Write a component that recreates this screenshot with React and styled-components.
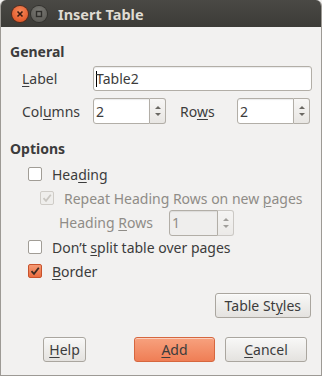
import React from 'react'
import styled, { createGlobalStyle } from 'styled-components'

const Global = createGlobalStyle`
  html, body { margin: 0; padding: 0; background: #f2f1f0; }
  body { font-family: "Noto Sans", "DejaVu Sans", sans-serif; font-size: 14px; color: #3c3c3c; }
`

const Window = styled.div`
  width: 322px;
  height: 376px;
  box-sizing: border-box;
  display: flex;
  flex-direction: column;
  background: #f2f1f0;
  border: 1px solid #9d9a95;
  border-top: none;
  border-radius: 6px 6px 0 0;
  overflow: hidden;
`

const TitleBar = styled.div`
  height: 27px;
  flex: none;
  display: flex;
  align-items: center;
  gap: 3px;
  padding-left: 11px;
  background: linear-gradient(#4a4945, #3c3b37);
  color: #dfdbd2;
  font-family: "Noto Sans", sans-serif;
  font-weight: bold;
  font-size: 14.5px;
`

const Circle = styled.div`
  width: 16px;
  height: 16px;
  border-radius: 50%;
  display: flex;
  align-items: center;
  justify-content: center;
  background: ${p => (p.$close ? 'radial-gradient(circle at 50% 35%, #f58a5c, #de4a1a)' : 'radial-gradient(circle at 50% 35%, #7b7a75, #55544f)')};
  box-shadow: 0 0 0 1px ${p => (p.$close ? '#5a2a1a' : '#33322e')};
`

const Title = styled.span`
  margin-left: 8px;
`

const Body = styled.div`
  flex: 1;
  display: flex;
  flex-direction: column;
  padding: 16px 9px 0 9px;
`

const SectionTitle = styled.div`
  font-weight: bold;
  height: 17px;
  line-height: 17px;
  margin-top: ${p => p.$mt || 0}px;
`

const GeneralGrid = styled.div`
  display: grid;
  grid-template-columns: 71px 1fr;
  row-gap: 7px;
  margin-top: 6px;
  padding-left: 12px;
  align-items: center;
`

const Label = styled.span`
  color: ${p => (p.$disabled ? '#8f8c87' : '#3c3c3c')};
  width: ${p => (p.$w ? p.$w + 'px' : 'auto')};
  flex: none;
  u { text-decoration-thickness: 1px; text-underline-offset: 2px; }
`

const TextInput = styled.div`
  height: 25px;
  box-sizing: border-box;
  border: 1px solid #b2aea7;
  border-radius: 3px;
  background: ${p => (p.$disabled ? '#efeeed' : '#fff')};
  box-shadow: inset 0 1px 1px rgba(0,0,0,0.08);
  display: flex;
  align-items: center;
  padding-left: 2px;
  color: ${p => (p.$disabled ? '#8f8c87' : '#3c3c3c')};
  flex: ${p => (p.$grow ? 1 : 'none')};
`

const Caret = styled.span`
  display: inline-block;
  width: 1px;
  height: 16px;
  background: #000;
  margin-right: -1px;
`

const SpinWrap = styled.div`
  display: flex;
  height: 26px;
  width: ${p => p.$w}px;
  flex: none;
  ${TextInput} { height: 26px; border-radius: 3px 0 0 3px; flex: 1; }
`

const SpinButtons = styled.div`
  width: 16px;
  box-sizing: border-box;
  border: 1px solid #b2aea7;
  border-left: none;
  border-radius: 0 3px 3px 0;
  background: linear-gradient(#f7f6f5, #e8e6e3);
  display: flex;
  flex-direction: column;
  align-items: center;
  justify-content: center;
  gap: 4px;
  opacity: ${p => (p.$disabled ? 0.6 : 1)};
`

const Arrow = styled.div`
  width: 0;
  height: 0;
  border-left: 3px solid transparent;
  border-right: 3px solid transparent;
  ${p => (p.$up ? 'border-bottom: 3px solid #6a6863;' : 'border-top: 3px solid #6a6863;')}
`

const NumberRow = styled.div`
  display: flex;
  align-items: center;
`

const RowsLabel = styled(Label)`
  margin-left: 14px;
  width: 57px;
`

const OptionList = styled.div`
  display: flex;
  flex-direction: column;
  margin-top: 5px;
`

const OptionRow = styled.div`
  display: flex;
  align-items: center;
  height: ${p => p.$h || 24}px;
  padding-left: ${p => p.$indent}px;
  gap: ${p => (p.$gap === undefined ? 10 : p.$gap)}px;
`

const Box = styled.div`
  width: 14px;
  height: 14px;
  box-sizing: border-box;
  border-radius: 2px;
  border: 1px solid ${p => (p.$checked ? '#c8522c' : p.$disabled ? '#cfccc7' : '#a19d96')};
  background: ${p => (p.$checked ? 'linear-gradient(#f59a74, #ea6c3f)' : p.$disabled ? '#efeeec' : '#fff')};
  display: flex;
  align-items: center;
  justify-content: center;
  flex: none;
`

const Button = styled.div`
  height: 25px;
  box-sizing: border-box;
  padding: 0 ${p => p.$pad || 10}px;
  width: ${p => (p.$w ? p.$w + 'px' : 'auto')};
  display: flex;
  align-items: center;
  justify-content: center;
  border-radius: 3px;
  border: 1px solid ${p => (p.$primary ? '#d6673f' : '#aaa69f')};
  background: ${p => (p.$primary ? 'linear-gradient(#f7a17e, #ef7e55)' : 'linear-gradient(#f8f8f7, #e4e2df)')};
  box-shadow: inset 0 1px 0 rgba(255,255,255,0.5);
  color: #3c3c3c;
  margin-left: ${p => p.$ml || 0}px;
  u { text-decoration-thickness: 1px; text-underline-offset: 2px; }
`

const StylesRow = styled.div`
  display: flex;
  justify-content: flex-end;
  margin-top: 10px;
  padding-right: 1px;
`

const ButtonBar = styled.div`
  display: flex;
  align-items: center;
  margin-top: 19px;
  padding-left: 33px;
  padding-right: 5px;
`

const Spacer = styled.div`
  flex: 1;
`

function Check({ color }) {
  return (
    <svg width="10" height="10" viewBox="0 0 10 10">
      <path d="M1.5 5.2 L4 7.8 L8.8 1.8" fill="none" stroke={color} strokeWidth="1.8" />
    </svg>
  )
}

function Spin({ value, w, disabled }) {
  return (
    <SpinWrap $w={w}>
      <TextInput $disabled={disabled}>{value}</TextInput>
      <SpinButtons $disabled={disabled}>
        <Arrow $up />
        <Arrow />
      </SpinButtons>
    </SpinWrap>
  )
}

export default function App() {
  return (
    <>
      <Global />
      <Window>
        <TitleBar>
          <Circle $close>
            <svg width="8" height="8" viewBox="0 0 8 8">
              <path d="M1.5 1.5 L6.5 6.5 M6.5 1.5 L1.5 6.5" stroke="#3a1a10" strokeWidth="1.6" />
            </svg>
          </Circle>
          <Circle>
            <svg width="8" height="8" viewBox="0 0 8 8">
              <rect x="1.5" y="1.5" width="5" height="5" fill="none" stroke="#2e2d2a" strokeWidth="1.4" />
            </svg>
          </Circle>
          <Title>Insert Table</Title>
        </TitleBar>
        <Body>
          <SectionTitle>General</SectionTitle>
          <GeneralGrid>
            <Label><u>L</u>abel</Label>
            <TextInput $grow><Caret />Table2</TextInput>
            <Label>Col<u>u</u>mns</Label>
            <NumberRow>
              <Spin value="2" w={73} />
              <RowsLabel>Ro<u>w</u>s</RowsLabel>
              <Spin value="2" w={73} />
            </NumberRow>
          </GeneralGrid>

          <SectionTitle $mt={16}>Options</SectionTitle>
          <OptionList>
            <OptionRow $indent={18}>
              <Box />
              <Label>Hea<u>d</u>ing</Label>
            </OptionRow>
            <OptionRow $indent={30}>
              <Box $disabled><Check color="#c9c6c1" /></Box>
              <Label $disabled>Repeat Heading Rows on new <u>p</u>ages</Label>
            </OptionRow>
            <OptionRow $indent={49} $h={25} $gap={0}>
              <Label $disabled $w={110}>Heading <u>R</u>ows</Label>
              <Spin value="1" w={65} disabled />
            </OptionRow>
            <OptionRow $indent={18}>
              <Box />
              <Label>Don’t <u>s</u>plit table over pages</Label>
            </OptionRow>
            <OptionRow $indent={18}>
              <Box $checked><Check color="#3a2a22" /></Box>
              <Label><u>B</u>order</Label>
            </OptionRow>
          </OptionList>

          <StylesRow>
            <Button $pad={9}>Table St<u>y</u>les</Button>
          </StylesRow>

          <ButtonBar>
            <Button $w={43}><u>H</u>elp</Button>
            <Spacer />
            <Button $w={81} $primary><u>A</u>dd</Button>
            <Button $w={82} $ml={10}><u>C</u>ancel</Button>
          </ButtonBar>
        </Body>
      </Window>
    </>
  )
}
